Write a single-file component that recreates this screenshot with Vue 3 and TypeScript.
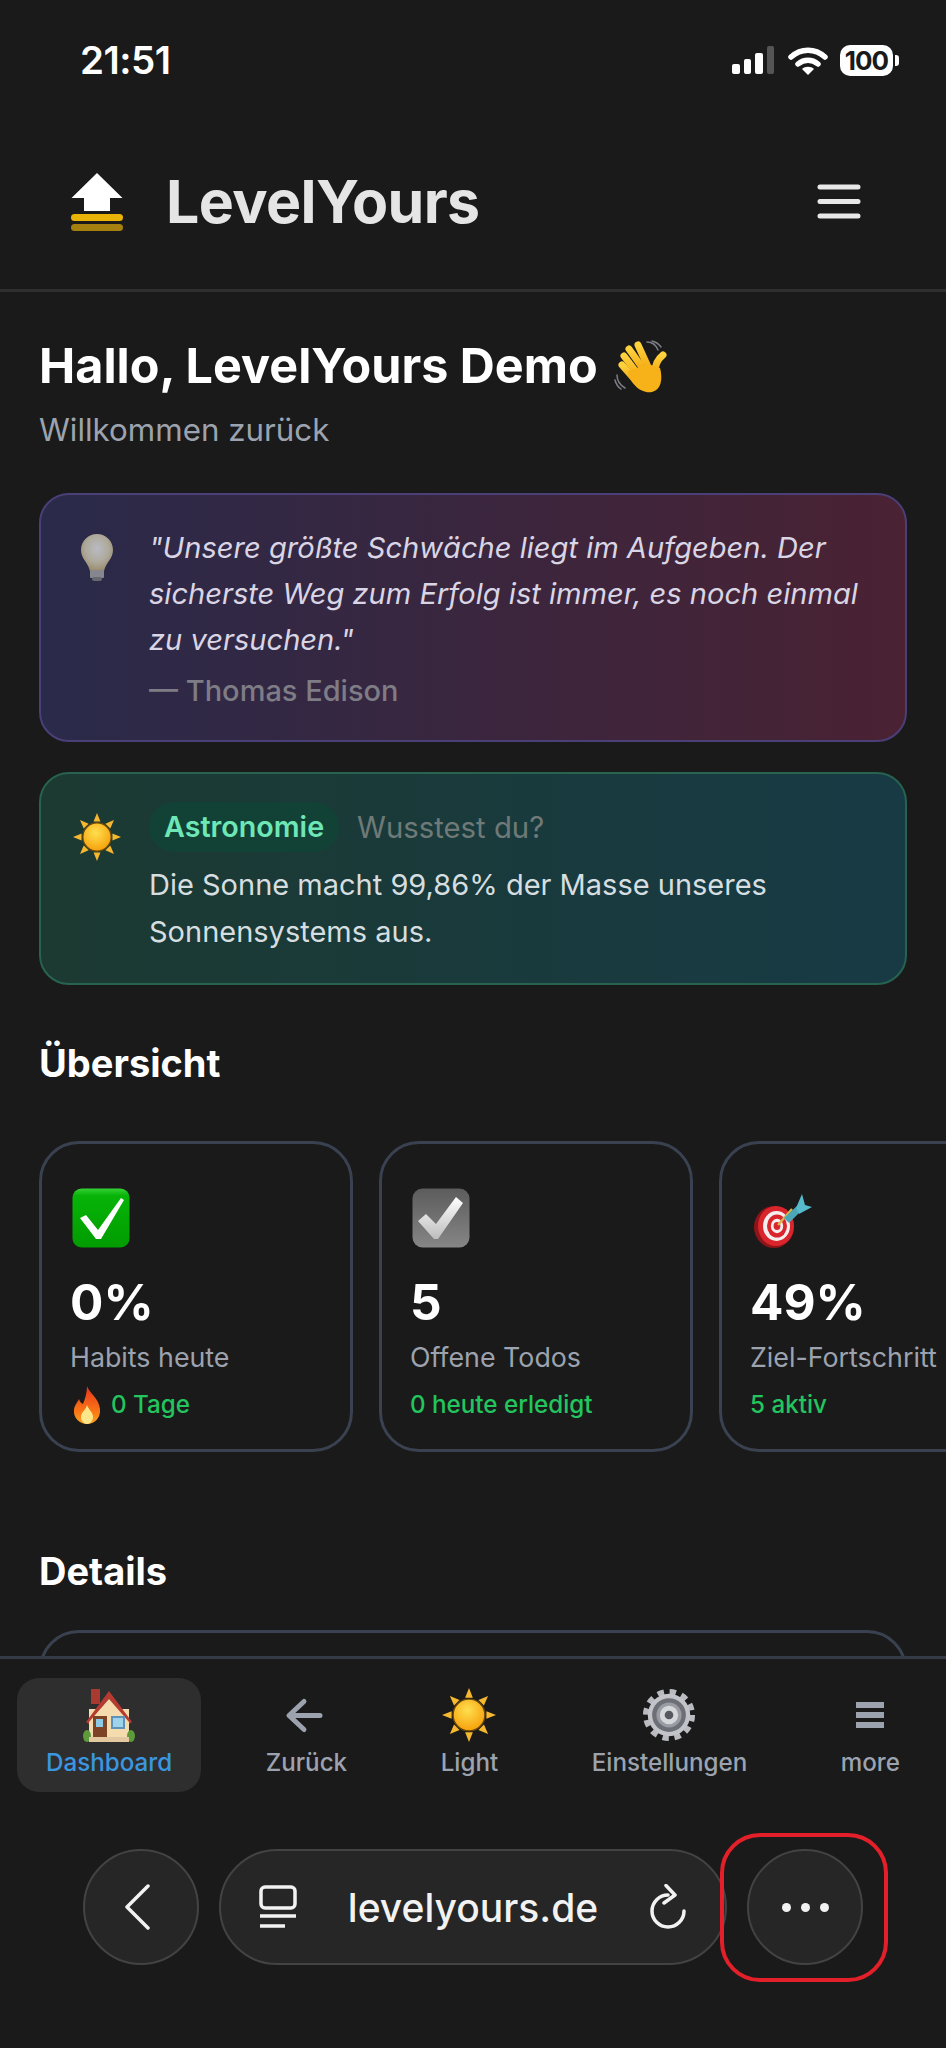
<script setup lang="ts">
// Statische Dashboard-Ansicht, Icons liegen als Symbole im versteckten SVG
interface Stat {
  icon: string;
  iconW: number;
  value: string;
  label: string;
  sub: string;
  flame?: boolean;
}

interface NavItem {
  icon: string;
  label: string;
  active?: boolean;
}

const stats: Stat[] = [
  { icon: "e-check", iconW: 58, value: "0%", label: "Habits heute", sub: "0 Tage", flame: true },
  { icon: "e-todo", iconW: 58, value: "5", label: "Offene Todos", sub: "0 heute erledigt" },
  { icon: "e-dart", iconW: 60, value: "49%", label: "Ziel-Fortschritt", sub: "5 aktiv" },
];

const navItems: NavItem[] = [
  { icon: "e-house", label: "Dashboard", active: true },
  { icon: "i-arrow", label: "Zurück" },
  { icon: "e-sun", label: "Light" },
  { icon: "e-gear", label: "Einstellungen" },
  { icon: "i-menu", label: "more" },
];
</script>

<template>
  <div class="phone">
    <svg class="defs" width="0" height="0" aria-hidden="true">
      <defs>
        <linearGradient id="g-green" x1="0" y1="0" x2="0" y2="1">
          <stop offset="0" stop-color="#35d235" />
          <stop offset="0.12" stop-color="#07b407" />
          <stop offset="1" stop-color="#019c01" />
        </linearGradient>
        <linearGradient id="g-grey" x1="0" y1="0" x2="0" y2="1">
          <stop offset="0" stop-color="#5c5c5c" />
          <stop offset="1" stop-color="#868686" />
        </linearGradient>
        <linearGradient id="g-tick" x1="0" y1="0" x2="0" y2="1">
          <stop offset="0" stop-color="#ffffff" />
          <stop offset="1" stop-color="#bdbdbd" />
        </linearGradient>
        <radialGradient id="g-sun" cx="0.45" cy="0.35" r="0.7">
          <stop offset="0" stop-color="#ffdf4f" />
          <stop offset="1" stop-color="#f59c06" />
        </radialGradient>
        <radialGradient id="g-bulb" cx="0.5" cy="0.4" r="0.6">
          <stop offset="0" stop-color="#c9cbd2" />
          <stop offset="0.6" stop-color="#bdb8a6" />
          <stop offset="1" stop-color="#a69871" />
        </radialGradient>
        <linearGradient id="g-flame" x1="0" y1="0" x2="0" y2="1">
          <stop offset="0" stop-color="#e8321c" />
          <stop offset="0.7" stop-color="#f97a16" />
          <stop offset="1" stop-color="#fba51e" />
        </linearGradient>
        <linearGradient id="g-hand" x1="0" y1="0" x2="0" y2="1">
          <stop offset="0" stop-color="#ffd23c" />
          <stop offset="1" stop-color="#f3a912" />
        </linearGradient>
      </defs>

      <symbol id="e-sun" viewBox="0 0 56 56">
        <g fill="#f5b82e">
          <path d="M28 0l4 10h-8z" />
          <path d="M28 56l4-10h-8z" />
          <path d="M0 28l10-4v8z" />
          <path d="M56 28l-10-4v8z" />
          <path d="M8.2 8.2l10 4.3-5.7 5.7z" />
          <path d="M47.8 8.2l-10 4.3 5.7 5.7z" />
          <path d="M8.2 47.8l10-4.3-5.7-5.7z" />
          <path d="M47.8 47.8l-10-4.3 5.7-5.7z" />
        </g>
        <circle cx="28" cy="28" r="16.5" fill="url(#g-sun)" stroke="#6a4708" stroke-width="1.4" />
      </symbol>

      <symbol id="e-check" viewBox="0 0 58 60">
        <rect x="0.5" y="0.5" width="57" height="59" rx="9" fill="url(#g-green)" />
        <path d="M8 30l6-3 12 15 23-32 3 2-23 39h-5z" fill="#fff" />
      </symbol>

      <symbol id="e-todo" viewBox="0 0 58 60">
        <rect x="0.5" y="0.5" width="57" height="59" rx="10" fill="url(#g-grey)" />
        <path d="M6 33l8-7 10 10 20-27 7 6-25 36h-4z" fill="url(#g-tick)" />
      </symbol>

      <symbol id="e-dart" viewBox="0 -6 60 60">
        <ellipse cx="22" cy="33" rx="20" ry="21" fill="#8d1418" />
        <ellipse cx="24" cy="32" rx="18" ry="20" fill="#d9252b" />
        <ellipse cx="24.5" cy="32" rx="13.5" ry="15" fill="#f4efef" />
        <ellipse cx="25" cy="32" rx="10" ry="11.5" fill="#d9252b" />
        <ellipse cx="25" cy="32" rx="6.2" ry="7.2" fill="#f4efef" />
        <ellipse cx="25" cy="32" rx="3.4" ry="4" fill="#d9252b" />
        <path d="M26 31L40 15" stroke="#d8b54b" stroke-width="2.4" />
        <path d="M32 24l14-13 4 5-13 13z" fill="#4ba6b8" />
        <path d="M44 14L50 0l3 11 7 2-13 7z" fill="#56b9cc" />
      </symbol>

      <symbol id="e-house" viewBox="0 0 52 54">
        <rect x="8" y="1" width="9" height="15" fill="#a83a30" />
        <rect x="6" y="21" width="40" height="28" fill="#f5dcae" />
        <path d="M26 3L49 34l-3 2L26 11 6 36l-3-2z" fill="#b53b30" />
        <path d="M26 11L46 34v5H6v-5z" fill="#f5dcae" />
        <rect x="10" y="28" width="14" height="22" fill="#7d4326" />
        <rect x="13" y="31" width="7" height="8" fill="#8ecae6" />
        <rect x="28" y="28" width="14" height="13" fill="#5d93b8" />
        <rect x="30" y="30" width="10" height="9" fill="#9fd3ea" />
        <ellipse cx="4" cy="48" rx="4" ry="6" fill="#5d9b3a" />
        <ellipse cx="48" cy="48" rx="4" ry="6" fill="#5d9b3a" />
        <rect x="6" y="49" width="40" height="5" fill="#e4c9a0" />
      </symbol>

      <symbol id="i-arrow" viewBox="0 0 54 54">
        <path d="M25 13.500L10 27.500l15 14M11 27.500h30" fill="none" stroke="#9ca3af" stroke-width="5" stroke-linecap="round" stroke-linejoin="round" />
      </symbol>

      <symbol id="e-gear" viewBox="0 0 56 56">
        <circle cx="28" cy="28" r="24" fill="none" stroke="#b9bbc0" stroke-width="6" stroke-dasharray="6.6 5.96" />
        <circle cx="28" cy="28" r="22" fill="#c2c4c9" />
        <circle cx="28" cy="28" r="17.5" fill="#6d6f76" />
        <circle cx="28" cy="28" r="13" fill="#9a9ca3" />
        <circle cx="28" cy="28" r="9.5" fill="#d6d7db" />
        <circle cx="28" cy="28" r="4.5" fill="#56585f" />
      </symbol>

      <symbol id="i-menu" viewBox="0 0 54 54">
        <path d="M13 14h28v6H13zM13 24h28v6H13zM13 34h28v6H13z" fill="#9ca3af" />
      </symbol>

      <symbol id="e-wave" viewBox="0 0 56 54">
        <g fill="none" stroke="#7d7f86" stroke-width="1.5" stroke-linecap="round">
          <path d="M33 2c5 0 9 3 11 8" />
          <path d="M38 1c4 1 7 3 9 6" />
          <path d="M3 35c0 6 3 10 8 13" />
          <path d="M1 40c1 4 3 7 6 9" />
        </g>
        <g stroke="url(#g-hand)" stroke-width="7" stroke-linecap="round">
          <path d="M15 9l15 21" />
          <path d="M10 16l16 21" />
          <path d="M8 25l14 16" />
          <path d="M24 5l11 24" />
          <path d="M49 15c-5 4-8 10-8 17" />
        </g>
        <path d="M14 31c2 13 13 23 24 21 9-2 11-13 8-24L34 24z" fill="#f7b21a" />
      </symbol>

      <symbol id="e-bulb" viewBox="0 0 32 47">
        <g opacity="0.9">
          <path d="M16 0c9 0 16 7 16 16 0 9-7 12-9 21H9C7 28 0 25 0 16 0 7 7 0 16 0z" fill="url(#g-bulb)" />
          <rect x="9" y="36" width="14" height="8" rx="1" fill="#8f9096" />
          <rect x="11" y="43" width="10" height="4" rx="2" fill="#6e6f75" />
        </g>
      </symbol>

      <symbol id="e-flame" viewBox="0 0 28 38">
        <path d="M14 0c2 7 12 12 13 23 1 9-6 15-13 15S0 32 1 24c.5-5 3-7 5-11 1 3 2 4 4 5 2-5 4-11 4-18z" fill="url(#g-flame)" />
        <path d="M14 19c1 4 6 7 6 12 0 4-3 7-6 7s-6-3-6-7c0-5 5-7 6-12z" fill="#fde68a" />
      </symbol>
    </svg>

    <div class="status-bar">
      <span class="time">21:51</span>
      <div class="status-icons">
        <div class="signal">
          <i class="b1"></i><i class="b2"></i><i class="b3"></i><i class="b4"></i>
        </div>
        <svg class="wifi" viewBox="0 0 40 29" width="40" height="29">
          <path d="M3 11c10-9 24-9 34 0" fill="none" stroke="#fff" stroke-width="5.5" stroke-linecap="round" />
          <path d="M10 18c6-5 14-5 20 0" fill="none" stroke="#fff" stroke-width="5.5" stroke-linecap="round" />
          <path d="M14 23c3-3 9-3 12 0l-6 6z" fill="#fff" />
        </svg>
        <div class="battery"><span class="battery-level">100</span></div>
      </div>
    </div>

    <header class="app-header">
      <div class="brand">
        <svg class="logo" viewBox="0 0 52 58" width="52" height="58">
          <path d="M26 0l25.500 25H39v13H13V25H.5z" fill="#fff" />
          <rect y="41" width="52" height="7" rx="3.500" fill="#eab308" />
          <rect y="51" width="52" height="7" rx="3.500" fill="#a5800f" />
        </svg>
        <span class="brand-name">LevelYours</span>
      </div>
      <svg class="burger" viewBox="0 0 44 36" width="44" height="36">
        <path d="M3 3h38M3 17.500h38M3 32h38" stroke="#e8e8e8" stroke-width="5" stroke-linecap="round" />
      </svg>
    </header>

    <main class="content">
      <h1 class="greeting">
        Hallo, LevelYours Demo
        <svg width="56" height="54"><use href="#e-wave" /></svg>
      </h1>
      <p class="welcome">Willkommen zurück</p>

      <section class="quote-card">
        <svg class="card-icon bulb" width="32" height="47"><use href="#e-bulb" /></svg>
        <div>
          <p class="quote">"Unsere größte Schwäche liegt im Aufgeben. Der sicherste Weg zum Erfolg ist immer, es noch einmal zu versuchen."</p>
          <p class="author">— Thomas Edison</p>
        </div>
      </section>

      <section class="fact-card">
        <svg class="card-icon sun" width="48" height="50"><use href="#e-sun" /></svg>
        <div>
          <div class="fact-head">
            <span class="chip">Astronomie</span>
            <span class="fact-hint">Wusstest du?</span>
          </div>
          <p class="fact">Die Sonne macht 99,86% der Masse unseres Sonnensystems aus.</p>
        </div>
      </section>

      <h2 class="section-title overview">Übersicht</h2>
      <div class="stats">
        <article v-for="s in stats" :key="s.label" class="stat">
          <svg class="stat-icon" :width="s.iconW" height="60"><use :href="'#' + s.icon" /></svg>
          <div class="stat-value">{{ s.value }}</div>
          <div class="stat-label">{{ s.label }}</div>
          <div class="stat-sub">
            <svg v-if="s.flame" width="28" height="38"><use href="#e-flame" /></svg>
            {{ s.sub }}
          </div>
        </article>
      </div>

      <h2 class="section-title details">Details</h2>
      <div class="details-card"></div>
    </main>

    <nav class="bottom-nav">
      <a v-for="item in navItems" :key="item.label" class="nav-item" :class="{ active: item.active }">
        <svg width="54" height="54"><use :href="'#' + item.icon" /></svg>
        <span>{{ item.label }}</span>
      </a>
    </nav>

    <div class="browser-bar">
      <button class="round-btn" type="button" aria-label="Zurück">
        <svg class="chevron" viewBox="0 0 26 46" width="26" height="46">
          <path d="M24 2L3 23l21 21" fill="none" stroke="#f2f2f2" stroke-width="3.500" stroke-linecap="round" stroke-linejoin="round" />
        </svg>
      </button>
      <div class="url-pill">
        <svg viewBox="0 0 38 44" width="38" height="44">
          <rect x="2" y="2" width="34" height="21" rx="4" fill="none" stroke="#f2f2f2" stroke-width="3.500" />
          <path d="M1 31h36M1 41h25" stroke="#f2f2f2" stroke-width="3.500" />
        </svg>
        <span class="url">levelyours.de</span>
        <svg viewBox="0 0 38 46" width="38" height="46">
          <path d="M19 11A16 16 0 1 0 35 27" fill="none" stroke="#f2f2f2" stroke-width="3.500" stroke-linecap="round" />
          <path d="M17 1.500L26 11l-11 8" fill="none" stroke="#f2f2f2" stroke-width="3.500" stroke-linecap="round" stroke-linejoin="round" />
        </svg>
      </div>
      <button class="round-btn menu-btn" type="button" aria-label="Mehr">
        <i></i><i></i><i></i>
        <span class="highlight"></span>
      </button>
    </div>
  </div>
</template>

<style scoped>
.phone {
  position: relative;
  width: 946px;
  height: 2048px;
  display: flex;
  flex-direction: column;
  overflow: hidden;
  background: #1a1a1a;
  color: #fff;
  font-family: Inter, "Liberation Sans", sans-serif;
}
.defs {
  position: absolute;
}

/* Statusleiste */
.status-bar {
  flex: none;
  height: 120px;
  display: flex;
  align-items: center;
  justify-content: space-between;
  padding: 0 53px 0 80px;
}
.time {
  font-size: 38.5px;
  font-weight: 600;
  letter-spacing: -0.5px;
}
.status-icons {
  display: flex;
  align-items: center;
}
.signal {
  display: flex;
  align-items: flex-end;
  gap: 4px;
  height: 28px;
  margin-right: 14px;
}
.signal i {
  width: 7.5px;
  background: #fff;
  border-radius: 2px;
}
.signal .b1 { height: 10px; }
.signal .b2 { height: 15px; }
.signal .b3 { height: 21px; }
.signal .b4 { height: 28px; background: #555; }
.battery {
  position: relative;
  width: 53px;
  height: 31px;
  margin-left: 12px;
  background: #fff;
  border-radius: 10px;
  display: flex;
  align-items: center;
  justify-content: center;
}
.battery::after {
  content: "";
  position: absolute;
  right: -6px;
  top: 10px;
  width: 4px;
  height: 11px;
  background: #fff;
  border-radius: 0 3px 3px 0;
}
.battery-level {
  color: #1a1a1a;
  font-size: 26px;
  font-weight: 700;
  letter-spacing: -1px;
}

/* Kopfzeile */
.app-header {
  flex: none;
  height: 172px;
  display: flex;
  align-items: center;
  justify-content: space-between;
  padding: 0 85px 6px 71px;
  box-sizing: border-box;
  border-bottom: 3px solid #2f2f2f;
}
.brand {
  display: flex;
  align-items: center;
  gap: 43px;
}
.brand-name {
  color: #e5e5e5;
  font-size: 59px;
  line-height: 1;
  font-weight: 700;
  letter-spacing: -0.6px;
}

/* Inhalt */
.content {
  flex: 1;
  min-height: 0;
  overflow: hidden;
  padding: 44px 39px 0;
}
.greeting {
  margin: 0;
  display: flex;
  align-items: center;
  gap: 16px;
  height: 60px;
  font-size: 48.5px;
  line-height: 60px;
  font-weight: 700;
}
.greeting svg {
  margin-top: 2px;
}
.welcome {
  margin: 14px 0 0;
  color: #9ca3af;
  font-size: 31.3px;
  line-height: 40px;
}
.quote-card,
.fact-card {
  display: grid;
  grid-template-columns: 108px 1fr;
  border-radius: 30px;
  border: 2px solid;
}
.quote-card {
  margin-top: 43px;
  height: 249px;
  box-sizing: border-box;
  padding: 29.5px 0 0;
  background: linear-gradient(90deg, #2a2a4a, #4a2233);
  border-color: #4b3f78;
}
.card-icon {
  justify-self: start;
}
.bulb {
  margin: 9px 0 0 40px;
}
.sun {
  margin: 10px 0 0 32px;
}
.quote {
  margin: 0;
  padding-right: 20px;
  color: #d9d5e5;
  font-size: 29.1px;
  line-height: 46px;
  font-style: italic;
}
.author {
  margin: 8.500px 0 0;
  color: #7e7c85;
  font-size: 29px;
  line-height: 40px;
  font-weight: 500;
}
.fact-card {
  margin-top: 30px;
  height: 213px;
  box-sizing: border-box;
  padding: 28px 0 0;
  background: linear-gradient(90deg, #1c3a32, #173a45);
  border-color: #27634f;
}
.fact-head {
  display: flex;
  align-items: center;
  gap: 18px;
  height: 50px;
}
.chip {
  padding: 0 15px;
  line-height: 50px;
  border-radius: 25px;
  background: #124236;
  color: #6ee7b7;
  font-size: 28.700px;
  font-weight: 600;
}
.fact-hint {
  color: #6f7a78;
  font-size: 29.3px;
}
.fact {
  margin: 10px 0 0;
  padding-right: 60px;
  color: #d6dee0;
  font-size: 29px;
  line-height: 46.500px;
}
.section-title {
  margin: 0;
  font-size: 38px;
  line-height: 50px;
  font-weight: 700;
}
.overview {
  margin-top: 53px;
}
.details {
  margin-top: 94px;
}
.stats {
  display: flex;
  gap: 26px;
  margin-top: 53px;
}
.stat {
  flex: none;
  width: 314px;
  height: 311px;
  box-sizing: border-box;
  padding: 44px 0 0 28px;
  background: #1a1a1a;
  border: 3px solid #3a4150;
  border-radius: 40px;
}
.stat-icon {
  display: block;
  margin-left: 2px;
}
.stat-value {
  margin-top: 24px;
  font-size: 49.5px;
  line-height: 60px;
  font-weight: 700;
}
.stat-label {
  margin-top: 7px;
  color: #9ca3af;
  font-size: 26.8px;
  line-height: 36px;
  white-space: nowrap;
}
.stat-sub {
  display: flex;
  align-items: center;
  gap: 10px;
  margin-top: 13px;
  height: 34px;
  color: #22c55e;
  font-size: 24.2px;
  line-height: 34px;
  font-weight: 500;
}
.stat-sub svg {
  margin-left: 3px;
}
.details-card {
  margin-top: 34px;
  height: 200px;
  border: 3px solid #3a4150;
  border-radius: 40px;
}

/* Untere Navigation */
.bottom-nav {
  flex: none;
  height: 160px;
  box-sizing: border-box;
  display: flex;
  justify-content: space-between;
  align-items: flex-start;
  padding: 19px 17px 0;
  border-top: 3px solid #343a46;
}
.nav-item {
  display: flex;
  flex-direction: column;
  align-items: center;
  height: 114px;
  box-sizing: border-box;
  padding: 10px 29px 0;
  border-radius: 22px;
  color: #9ca3af;
  font-size: 24.2px;
  font-weight: 500;
  line-height: 34px;
}
.nav-item span {
  margin-top: 4px;
}
.nav-item.active {
  background: #2e2e2e;
  color: #3b96e0;
}

/* Browserleiste */
.browser-bar {
  flex: none;
  height: 232px;
  box-sizing: border-box;
  display: flex;
  gap: 20px;
  padding: 33px 0 0 83px;
}
.round-btn {
  width: 116px;
  height: 116px;
  padding: 0;
  display: flex;
  align-items: center;
  justify-content: center;
  background: #262626;
  border: 2px solid #434343;
  border-radius: 50%;
}
.chevron {
  margin-left: -8px;
}
.url-pill {
  width: 508px;
  height: 116px;
  box-sizing: border-box;
  display: flex;
  align-items: center;
  justify-content: space-between;
  padding: 0 38px;
  background: #262626;
  border: 2px solid #434343;
  border-radius: 58px;
}
.url {
  color: #f2f2f2;
  font-size: 39px;
  font-weight: 500;
}
.menu-btn {
  position: relative;
  gap: 10px;
}
.menu-btn i {
  width: 9px;
  height: 9px;
  border-radius: 50%;
  background: #f2f2f2;
}
.highlight {
  position: absolute;
  left: -29px;
  top: -18px;
  width: 168px;
  height: 149px;
  box-sizing: border-box;
  border: 4.5px solid #e3202a;
  border-radius: 40px;
}
</style>
